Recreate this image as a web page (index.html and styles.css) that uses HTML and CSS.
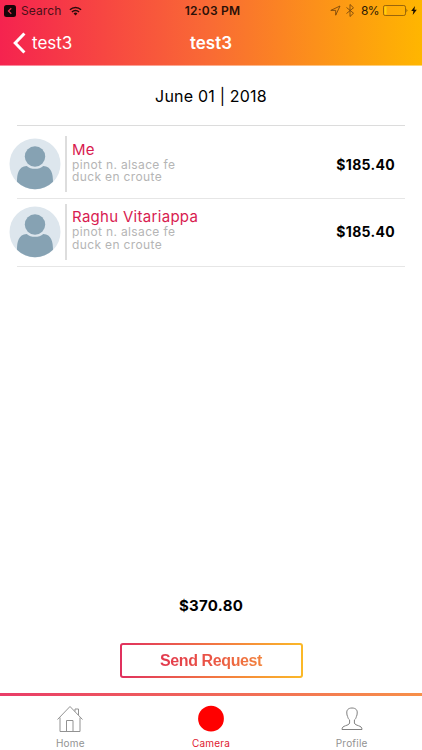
FILE: index.html
```html
<!DOCTYPE html>
<html lang="en">
<head>
    <meta charset="UTF-8">
    <meta name="viewport" content="width=device-width, initial-scale=1.0">
    <title>test3</title>
    <link rel="stylesheet" href="styles.css">
</head>
<body>
    <div class="app">
        <header>
            <div class="status-bar">
                <div class="status-left">
                    <svg class="back-app" width="12" height="12" viewBox="0 0 12 12"><rect width="12" height="12" rx="2.5" fill="#160508"/><path d="M7.3 3.2 4.4 6l2.9 2.8" fill="none" stroke="#e8304e" stroke-width="1.2"/></svg>
                    <span class="search">Search</span>
                    <svg class="wifi" width="13" height="10" viewBox="0 0 14 10"><g fill="none" stroke="#2a0c0c" stroke-width="1.6"><path d="M1 3.7a8.5 8.5 0 0 1 12 0"/><path d="M3.2 6a5.4 5.4 0 0 1 7.6 0"/></g><path d="M4.9 7.6a3 3 0 0 1 4.2 0L7 9.8z" fill="#2a0c0c"/></svg>
                </div>
                <span class="time">12:03 PM</span>
                <div class="status-right">
                    <svg width="11" height="11" viewBox="0 0 11 11"><path d="M.8 5.4 10 1 5.7 10.2V5.4z" fill="none" stroke="#7c4a0c" stroke-width=".9"/></svg>
                    <svg class="bluetooth" width="8" height="13" viewBox="0 0 8 13"><path d="m.5 3.5 7 5.7-3.5 3.3v-12l3.5 3.3-7 5.7" fill="none" stroke="#7c4a0c" stroke-width=".9"/></svg>
                    <span class="percent">8%</span>
                    <svg class="battery" width="26" height="11" viewBox="0 0 26 11"><rect x=".5" y=".5" width="22" height="10" rx="1.7" fill="none" stroke="#80540c" stroke-width=".8"/><rect x="1.5" y="1.5" width="2" height="8" fill="#ffd20a"/><path d="M23.6 3.6q1.6 1.9 0 3.8z" fill="#5c3a05"/></svg>
                    <svg class="bolt" width="6" height="9" viewBox="0 0 6 9"><path d="M4 0 .2 5h2.2L1.7 9 5.8 3.8H3.4z" fill="#1b1000"/></svg>
                </div>
            </div>
            <div class="nav-bar">
                <a class="back">
                    <svg width="13" height="22" viewBox="0 0 13 22"><path d="M11.4 1.5 2.2 11l9.2 9.5" fill="none" stroke="#fff" stroke-width="3"/></svg>
                    <span>test3</span>
                </a>
                <h1>test3</h1>
            </div>
        </header>

        <main>
            <div class="date"><span>June 01 | 2018</span></div>
            <ul class="people">
                <li class="person">
                    <svg class="avatar" width="52" height="52" viewBox="0 0 52 52"><circle cx="26" cy="26" r="25.5" fill="#dde6ed"/><circle cx="26" cy="18.5" r="10.2" fill="#86a2b3"/><path d="M8 43.8c0-8 1.4-15.3 9.7-15.9 4.2 3.9 12.4 3.9 16.6 0 8.3.6 9.7 7.9 9.7 15.9a25.5 25.5 0 0 1-36 0z" fill="#86a2b3"/></svg>
                    <div class="info">
                        <h2>Me</h2>
                        <p>pinot n. alsace fe</p>
                        <p>duck en croute</p>
                    </div>
                    <span class="price">$185.40</span>
                </li>
                <li class="person">
                    <svg class="avatar" width="52" height="52" viewBox="0 0 52 52"><circle cx="26" cy="26" r="25.5" fill="#dde6ed"/><circle cx="26" cy="18.5" r="10.2" fill="#86a2b3"/><path d="M8 43.8c0-8 1.4-15.3 9.7-15.9 4.2 3.9 12.4 3.9 16.6 0 8.3.6 9.7 7.9 9.7 15.9a25.5 25.5 0 0 1-36 0z" fill="#86a2b3"/></svg>
                    <div class="info">
                        <h2>Raghu Vitariappa</h2>
                        <p>pinot n. alsace fe</p>
                        <p>duck en croute</p>
                    </div>
                    <span class="price">$185.40</span>
                </li>
            </ul>
            <div class="total">$370.80</div>
            <button class="send"><span>Send Request</span></button>
        </main>

        <nav class="tabs">
            <a class="tab">
                <svg width="28" height="28" viewBox="0 0 28 28"><g fill="none" stroke="#929292" stroke-width="1"><path d="M1.5 14.5 14 1.5l12.5 13"/><path d="M4 12.5v14h20v-14"/><path d="M10.5 26.5v-11h6.5v11"/><path d="M19 6.5v-2.500h3.500v6"/></g></svg>
                <span>Home</span>
            </a>
            <a class="tab active">
                <svg width="28" height="28" viewBox="0 0 28 28"><circle cx="14" cy="13.7" r="12.9" fill="#f00"/></svg>
                <span>Camera</span>
            </a>
            <a class="tab">
                <svg width="28" height="28" viewBox="0 0 28 28"><path d="M14 3c-3.7 0-5.500 2-5.200 5 .1 1.500.2 2.600.8 3.500.4 1.700 1 2.700 2 3.500v3c-.6 1.700-2 1.900-4 2.700-2.400.8-3.600 1.600-3.600 3.800h20c0-2.200-1.200-3-3.600-3.800-2-.8-3.400-1-4-2.700v-3c1-.8 1.600-1.800 2-3.500.6-.9.7-2 .8-3.500.3-3-1.500-5-5.200-5z" fill="none" stroke="#808080" stroke-width="1"/></svg>
                <span>Profile</span>
            </a>
        </nav>
    </div>
</body>
</html>
```
FILE: styles.css
```css
* {
    box-sizing: border-box;
}

body {
    margin: 0;
    font-family: Inter, "Noto Sans", sans-serif;
    background-color: #fff;
    color: #000;
}

h1, h2, p, ul {
    margin: 0;
    padding: 0;
}

.app {
    display: flex;
    flex-direction: column;
    width: 422px;
    height: 750px;
    overflow: hidden;
    white-space: nowrap;
}

header {
    height: 66px;
    flex: none;
    background: linear-gradient(90deg, #f5234f, #f96b34 50%, #ffb600);
    border-bottom: 1px solid rgba(255, 255, 255, 0.45);
}

.status-bar {
    display: grid;
    grid-template-columns: 1fr auto 1fr;
    align-items: center;
    height: 21px;
    padding: 0 5px 0 4px;
}

.status-left, .status-right {
    display: flex;
    align-items: center;
}

.status-right {
    justify-content: flex-end;
}

.search {
    margin: 0 8px 0 5px;
    font-size: 12px;
    letter-spacing: 0.1px;
    color: #4a1018;
}

.time {
    margin-left: 4px;
    font-size: 12px;
    font-weight: 600;
    letter-spacing: 0.2px;
    color: #2b1008;
}

.bluetooth {
    margin: 0 7px 0 5px;
}

.percent {
    font-size: 12px;
    letter-spacing: -0.6px;
    color: #2b1a05;
}

.battery {
    margin: 0 2px 0 4px;
}

.nav-bar {
    display: grid;
    grid-template-columns: 1fr auto 1fr;
    align-items: center;
    height: 44px;
    padding: 0 13px;
    color: #fff;
}

.back {
    display: flex;
    align-items: center;
    gap: 6px;
    font-size: 17px;
}

h1 {
    font-size: 17px;
    font-weight: 600;
}

main {
    display: flex;
    flex-direction: column;
    flex: 1;
}

.date {
    height: 60px;
    margin: 0 17px;
    border-bottom: 1px solid #dcdcdc;
    font-size: 16px;
    line-height: 60px;
    text-align: center;
    letter-spacing: 0.2px;
}

.people {
    padding-top: 5.5px;
    list-style: none;
}

.person {
    display: flex;
    align-items: center;
    height: 67.5px;
    padding: 0 27px 2px 9px;
    background: linear-gradient(#e6e6e6, #e6e6e6) 17px 100% / 388px 1px no-repeat;
}

.info {
    height: 56px;
    margin-left: 4px;
    padding: 3.5px 0 0 5px;
    border-left: 2px solid #ddd;
}

h2 {
    height: 19px;
    font-size: 15px;
    font-weight: 400;
    line-height: 19px;
    letter-spacing: 0.3px;
    color: #d81b50;
}

.info p {
    font-size: 12px;
    line-height: 12.5px;
    letter-spacing: 0.36px;
    color: #b5b5b5;
}

.price {
    margin-left: auto;
    font-size: 14px;
    font-weight: 700;
    letter-spacing: 0.3px;
}

.total {
    margin-top: auto;
    font-size: 15px;
    font-weight: 700;
    line-height: 18px;
    letter-spacing: 0.3px;
    text-align: center;
}

.send {
    align-self: center;
    width: 183px;
    height: 35px;
    margin: 28px 0 15px;
    padding: 0;
    border: 2px solid transparent;
    border-radius: 3px;
    background: linear-gradient(#fff, #fff) padding-box, linear-gradient(90deg, #e0305e, #f37a40 55%, #fbb928) border-box;
    font: bold 16px "Liberation Sans", Arial, sans-serif;
    letter-spacing: -0.4px;
}

.send span {
    display: block;
    background: linear-gradient(90deg, #dc2455, #ea5545 50%, #f8a535);
    -webkit-background-clip: text;
    background-clip: text;
    color: transparent;
}

.tabs {
    display: grid;
    grid-template-columns: repeat(3, 1fr);
    flex: none;
    height: 57px;
    border-top: 3px solid;
    border-bottom: 1px solid #f3dede;
    border-image: linear-gradient(90deg, #e93c68, #f79049) 3 0 0 0;
}

.tab {
    display: flex;
    flex-direction: column;
    align-items: center;
    padding-top: 9px;
    font-size: 10px;
    line-height: 14px;
    letter-spacing: 0.2px;
    color: #929292;
}

.tab span {
    margin-top: 3px;
}

.active {
    color: #e02030;
}
```
